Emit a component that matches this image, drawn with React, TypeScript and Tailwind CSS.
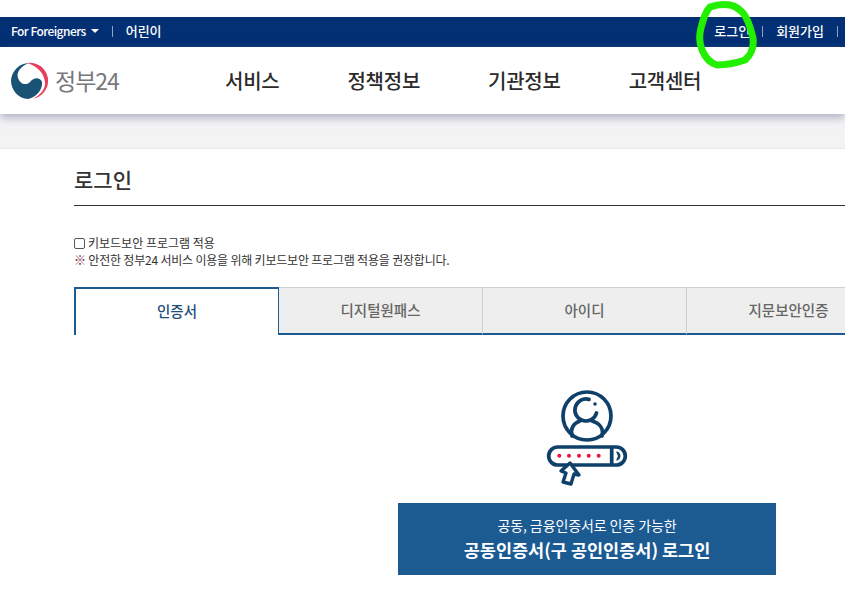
const font = { fontFamily: '"Noto Sans CJK KR", "Noto Sans", sans-serif' }

const navItems = ['서비스', '정책정보', '기관정보', '고객센터']
const tabs = ['디지털원패스', '아이디', '지문보안인증']

function Logo() {
  return (
    <svg width="38" height="38" viewBox="0 0 38 38" className="shrink-0">
      <path d="M16 1A18 18 0 0 1 22 36.7C30 33 35 26 34 20C33 10 24 3 16 1Z" fill="#e8405c" />
      <path
        d="M0 19A18.5 18.5 0 0 1 18 1C10 4 5 10 7 16C9 22 15 24 19 20C23 15 29 15 31 20C32 28 24 36 17 37C8 37 0 28 0 19Z"
        fill="#1a5276"
      />
    </svg>
  )
}

function CertIcon() {
  return (
    <svg width="84" height="100" viewBox="0 0 84 100" fill="none" stroke="#0f4069" strokeWidth="3.7" className="shrink-0">
      <circle cx="42" cy="26" r="24" />
      <path d="M44 9.4A11 11 0 1 0 51.5 23" strokeLinecap="round" />
      <circle cx="50" cy="14" r="1.8" fill="#0f4069" stroke="none" />
      <path d="M27 46C25 38 29 33 35 31M47 31C54 33 59 38 57 46" strokeLinecap="round" />
      <rect x="3.7" y="57" width="76.6" height="18" rx="9" />
      <path d="M66.7 57V75" />
      <path d="M71 61.5A4.5 4.5 0 0 1 71 70.5L73 66Z" fill="#0f4069" stroke="none" />
      <g fill="#e8173f" stroke="none">
        <circle cx="14.3" cy="65.7" r="2" />
        <circle cx="24" cy="65.7" r="2" />
        <circle cx="34" cy="65.7" r="2" />
        <circle cx="43.7" cy="65.7" r="2" />
        <circle cx="53.7" cy="65.7" r="2" />
      </g>
      <path d="M25 73L34 85L29 84L26 94L18 92L21 83L16 81Z" fill="#fff" strokeLinejoin="round" strokeWidth="3.4" />
    </svg>
  )
}

export default function App() {
  return (
    <div className="relative h-[596px] w-[845px] overflow-hidden bg-white pt-[17px]" style={font}>
      {/* util bar */}
      <div className="flex h-[30px] items-center justify-between bg-[#033074] pb-[2px] pl-[11px] text-[13px] font-medium text-white">
        <div className="flex items-center">
          <span className="text-[12px] tracking-[-0.55px]">For Foreigners</span>
          <span className="ml-[5px] h-0 w-0 border-x-[4px] border-t-[4px] border-x-transparent border-t-white" />
          <span className="ml-[13px] h-[11px] w-px bg-[#8fa3c4]" />
          <span className="ml-[13px]">어린이</span>
        </div>
        <div className="flex items-center pr-[7px]">
          <span>로그인</span>
          <span className="mx-[12px] h-[11px] w-px bg-[#8fa3c4]" />
          <span className="ml-px">회원가입</span>
          <span className="ml-[13px] h-[11px] w-px bg-[#8fa3c4]" />
        </div>
      </div>

      {/* main header */}
      <div className="relative z-10 flex h-[67px] items-center bg-white pl-[11px] shadow-[0_4px_8px_rgba(120,130,160,0.55)]">
        <Logo />
        <span className="ml-[6px] w-[72px] text-[23px] leading-none tracking-[-1px] text-[#77787b]">정부24</span>
        <nav className="ml-[98px] flex gap-[68px] text-[20px] font-medium tracking-[-0.25px] text-[#2b2b2b]">
          {navItems.map((item) => (
            <span key={item} className="whitespace-nowrap">{item}</span>
          ))}
        </nav>
      </div>

      <div className="h-[35px] border-b border-[#e8e8e8] bg-[#f4f3f4]" />

      {/* content */}
      <div className="pl-[74px]">
        <h1 className="mt-[16px] h-[41px] border-b border-[#333] text-[21px] font-medium leading-[28px] text-[#333]">로그인</h1>

        <label className="mt-[29px] flex h-[16px] items-center gap-[3px] text-[12px] leading-none text-[#333]">
          <span className="h-[11px] w-[11px] rounded-[2px] border border-[#555] bg-white" />
          키보드보안 프로그램 적용
        </label>
        <p className="mt-[1px] whitespace-nowrap text-[12px] leading-[16px] tracking-[-0.2px] text-[#333]">
          <span className="text-[#7a2040]">※</span> 안전한 정부24 서비스 이용을 위해 키보드보안 프로그램 적용을 권장합니다.
        </p>

        {/* tabs */}
        <div className="mt-[19px] flex w-[840px] text-[14.5px] font-medium">
          <div className="flex h-[48px] w-[205px] shrink-0 items-center justify-center border-t-2 border-r border-l-2 border-t-[#1c5a92] border-r-[#1c5a92] border-l-[#1c5a92] bg-white pb-[2px] text-[#1f4e79]">
            인증서
          </div>
          {tabs.map((tab) => (
            <div
              key={tab}
              className="flex h-[48px] w-[204px] shrink-0 items-center justify-center border-t border-r border-b-2 border-t-[#cfcfcf] border-r-[#cfcfcf] border-b-[#1c5a92] bg-[#eeeeee] pb-[1px] text-[#666]"
            >
              {tab}
            </div>
          ))}
        </div>

        {/* cert panel */}
        <div className="mt-[55px] ml-[324px] flex w-[378px] flex-col items-center">
          <CertIcon />
          <button className="mt-[13px] flex h-[72px] w-[378px] shrink-0 flex-col items-center justify-center bg-[#1c5a92] text-white">
            <span className="text-[14px] leading-[22px] tracking-[-0.1px]">공동, 금융인증서로 인증 가능한</span>
            <span className="text-[17.5px] font-bold leading-[28px]">공동인증서(구 공인인증서) 로그인</span>
          </button>
        </div>
      </div>

      {/* green marker circle */}
      <svg className="pointer-events-none absolute top-0 left-0 z-20" width="845" height="596" fill="none">
        <path
          d="M710 7C718 4 724 4 730 5C736 6 739 9 743 13C749 20 751 30 753 38C754 46 752 54 745 60C736 63 726 65 717 65C710 63 705 57 702 50C699 42 699 35 701 28C703 20 705 12 710 7Z"
          stroke="#22f000"
          strokeWidth="7"
          strokeLinejoin="round"
        />
      </svg>
    </div>
  )
}
